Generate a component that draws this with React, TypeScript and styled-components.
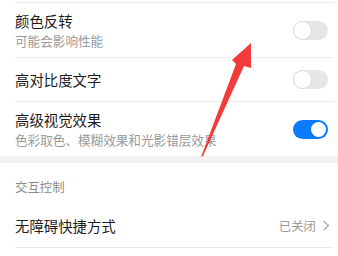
import styled, { createGlobalStyle } from 'styled-components';

const GlobalStyle = createGlobalStyle`
  html, body {
    margin: 0;
    padding: 0;
    background: #ffffff;
  }
  body {
    font-family: "Noto Sans CJK SC", "Noto Sans", sans-serif;
    -webkit-font-smoothing: antialiased;
  }
`;

const Page = styled.div`
  position: relative;
  width: 338px;
  height: 256px;
  overflow: hidden;
  background: #ffffff;
`;

const Group = styled.div<{ flush?: boolean }>`
  margin: 0 5px 0 15px;
  padding-top: ${({ flush }) => (flush ? 0 : 2)}px;
`;

const Row = styled.div<{ tall?: boolean; first?: boolean; last?: boolean }>`
  display: flex;
  align-items: center;
  justify-content: space-between;
  box-sizing: border-box;
  height: ${({ tall }) => (tall ? 55 : 44)}px;
  border-top: ${({ first }) => (first ? 'none' : '1px solid #ebebeb')};
  border-bottom: ${({ last }) => (last ? '1px solid #ebebeb' : 'none')};
  padding-right: 5px;
`;

const Texts = styled.div`
  display: flex;
  flex-direction: column;
`;

const Title = styled.div`
  font-size: 14.4px;
  line-height: 20px;
  color: #1c1c1c;
`;

const Subtitle = styled.div`
  font-size: 12.6px;
  line-height: 19px;
  color: #9a9a9a;
`;

const Band = styled.div`
  height: 7px;
  background: #f3f3f3;
`;

const SectionHeader = styled.div`
  margin-left: 15px;
  padding: 16px 0 8px;
  font-size: 12.4px;
  line-height: 17px;
  color: #8c8c8c;
`;

const Toggle = styled.div<{ on?: boolean }>`
  position: relative;
  width: 35px;
  height: 19px;
  border-radius: 10px;
  background: ${({ on }) => (on ? '#0a7bff' : '#e6e6e6')};
  flex-shrink: 0;
`;

const Knob = styled.div<{ on?: boolean }>`
  position: absolute;
  top: ${({ on }) => (on ? 2 : 0)}px;
  left: ${({ on }) => (on ? 18 : 0)}px;
  width: ${({ on }) => (on ? 15 : 19)}px;
  height: ${({ on }) => (on ? 15 : 19)}px;
  box-sizing: border-box;
  border-radius: 50%;
  background: #ffffff;
  border: ${({ on }) => (on ? 'none' : '1px solid #dcdcdc')};
`;

const Value = styled.div`
  display: flex;
  align-items: center;
  gap: 6px;
  margin-right: -2px;
  font-size: 12.4px;
  color: #9a9a9a;
`;

const Arrow = styled.svg`
  position: absolute;
  left: 0;
  top: 0;
  pointer-events: none;
`;

const Chevron = () => (
  <svg width="8" height="11" viewBox="0 0 8 11">
    <polyline points="1.5,1 6.5,5.5 1.5,10" fill="none" stroke="#ababab" strokeWidth="1.2" />
  </svg>
);

const Switch = ({ on }: { on?: boolean }) => (
  <Toggle on={on}>
    <Knob on={on} />
  </Toggle>
);

export default function App() {
  return (
    <Page>
      <GlobalStyle />
      <Group>
        <Row tall>
          <Texts>
            <Title>颜色反转</Title>
            <Subtitle>可能会影响性能</Subtitle>
          </Texts>
          <Switch />
        </Row>
        <Row>
          <Title>高对比度文字</Title>
          <Switch />
        </Row>
        <Row tall>
          <Texts>
            <Title>高级视觉效果</Title>
            <Subtitle>色彩取色、模糊效果和光影错层效果</Subtitle>
          </Texts>
          <Switch on />
        </Row>
      </Group>
      <Band />
      <SectionHeader>交互控制</SectionHeader>
      <Group flush>
        <Row first last>
          <Title>无障碍快捷方式</Title>
          <Value>
            已关闭
            <Chevron />
          </Value>
        </Row>
      </Group>
      <Arrow width="338" height="256" viewBox="0 0 338 256">
        <polygon
          points="251,43 232,60 236,64 201,157 203,156 244,66 251,68"
          fill="#f43b3b"
        />
      </Arrow>
    </Page>
  );
}
